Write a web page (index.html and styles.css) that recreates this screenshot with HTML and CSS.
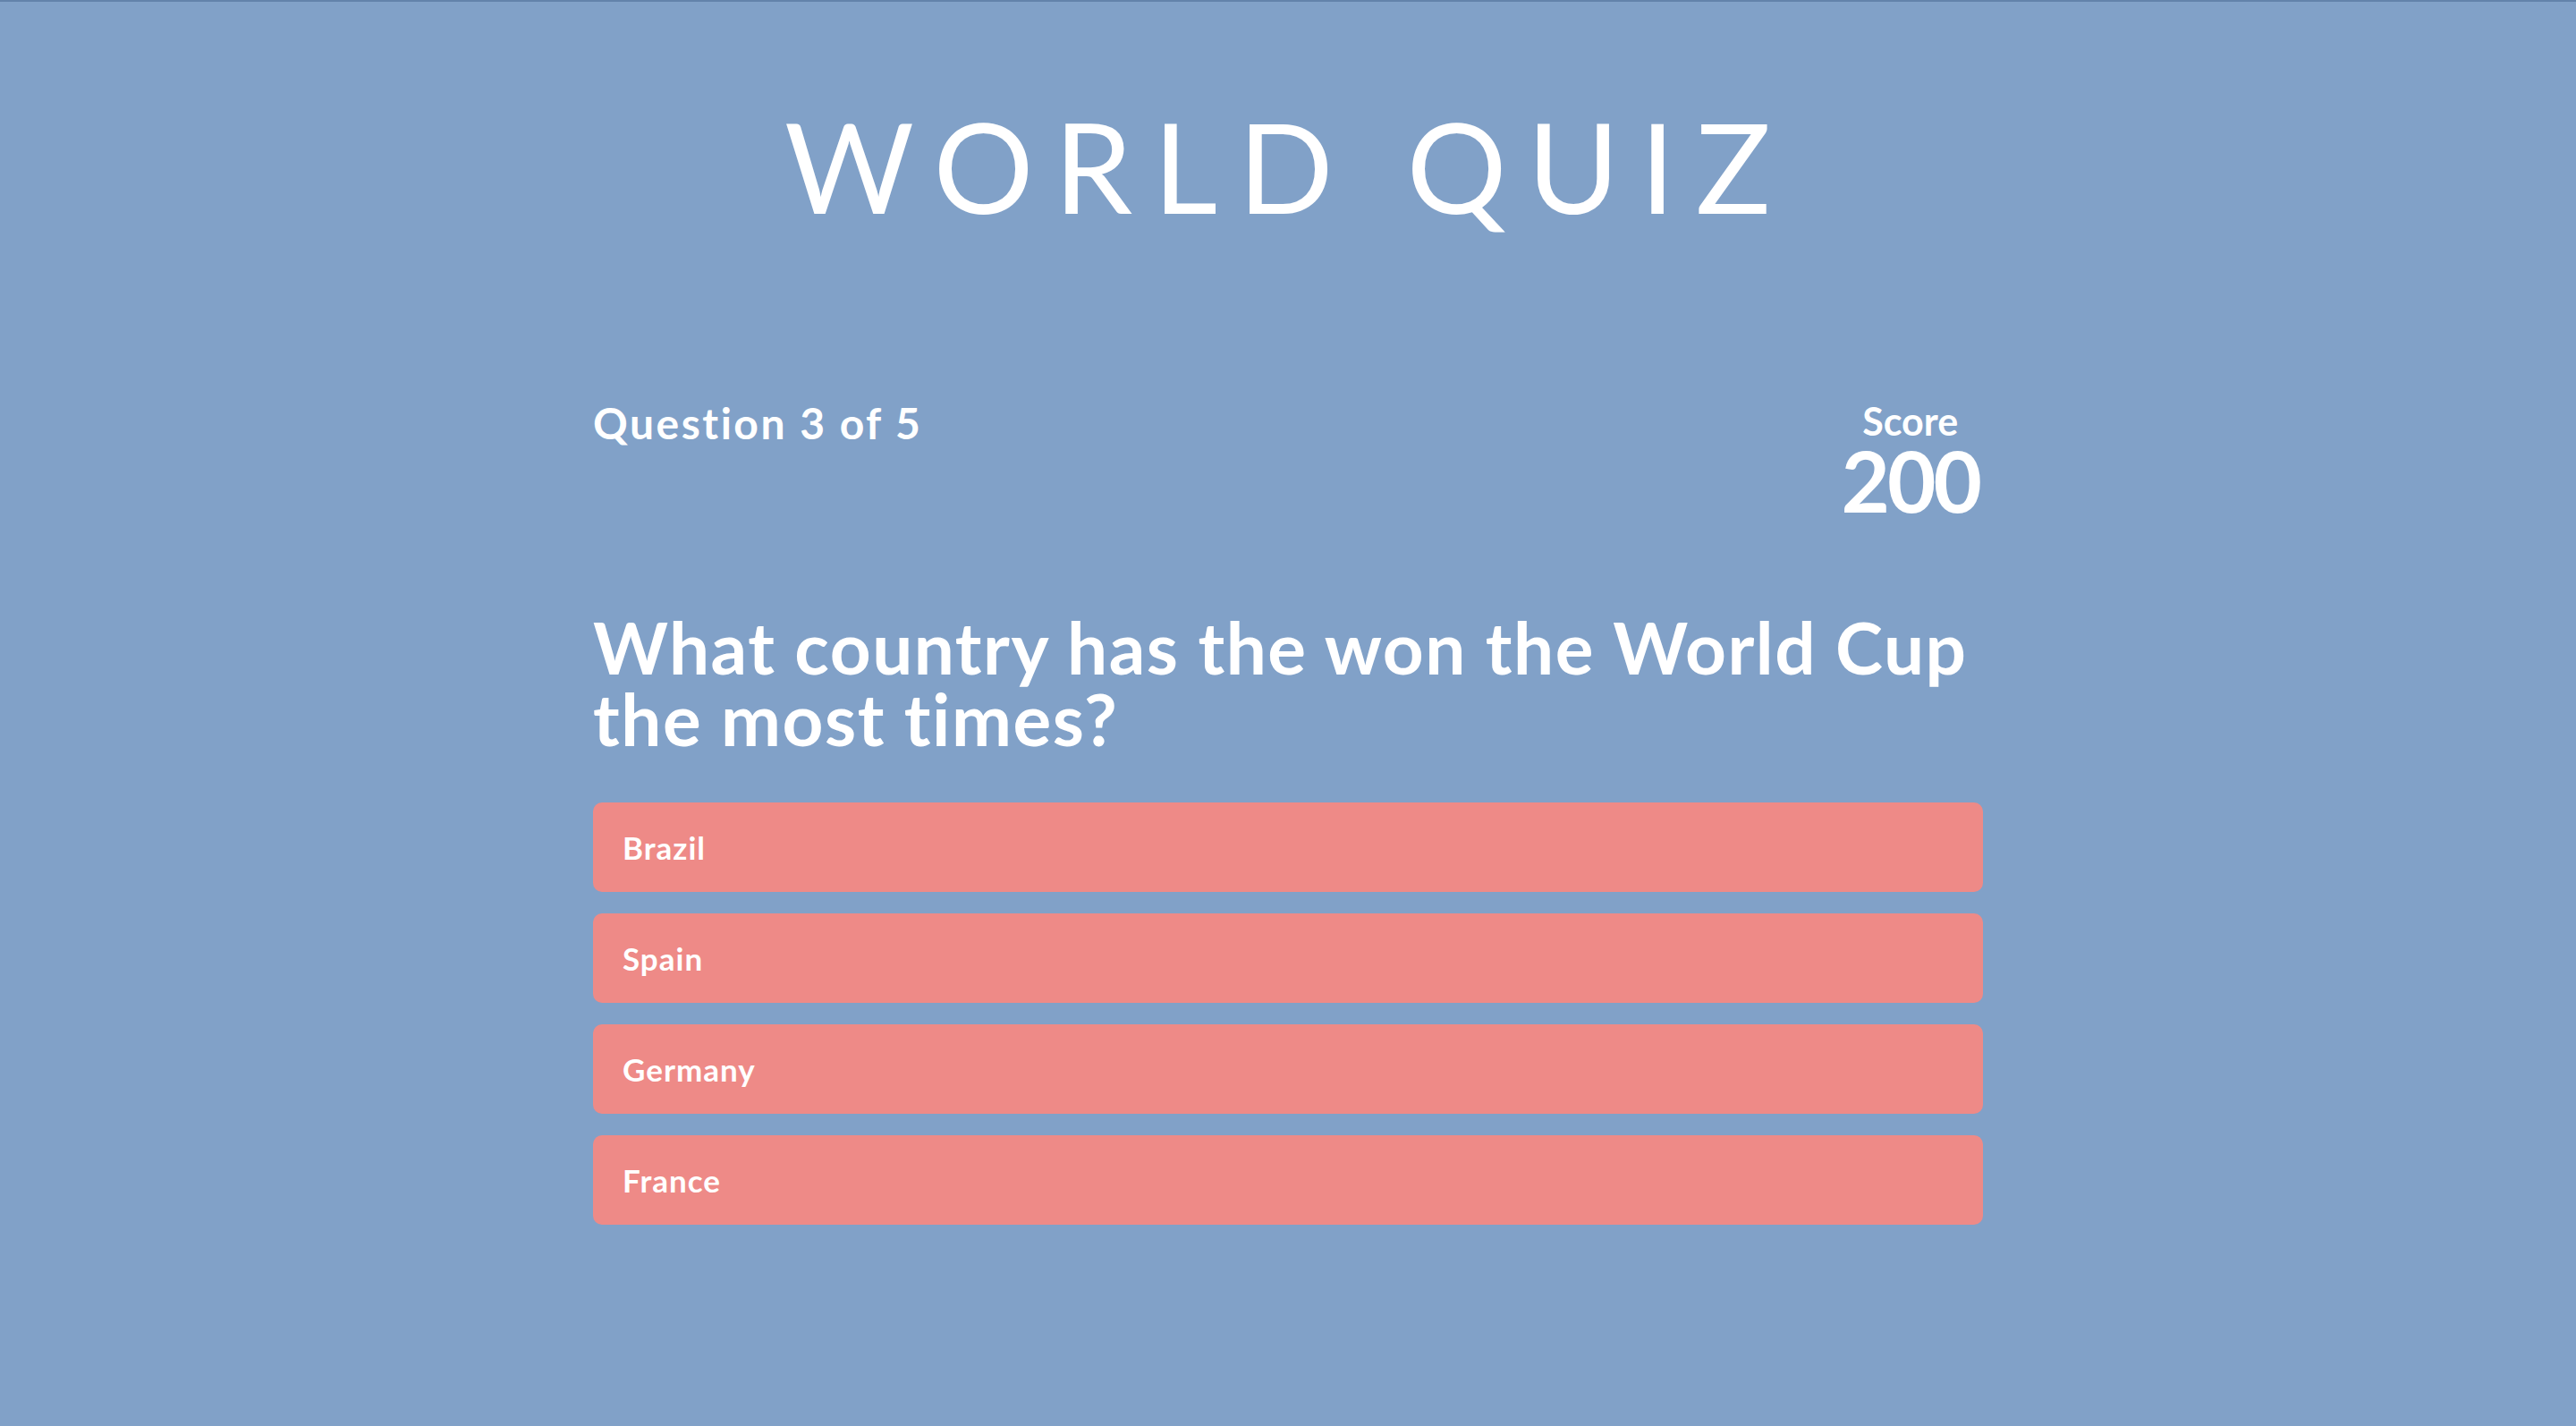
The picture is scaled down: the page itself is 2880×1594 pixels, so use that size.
FILE: index.html
```html
<!DOCTYPE html>
<html lang="en">
<head>
<meta charset="utf-8">
<title>World Quiz</title>
<link rel="stylesheet" href="styles.css">
</head>
<body>
<div class="page">
  <h1 class="title">WORLD QUIZ</h1>
  <main class="quiz">
    <div class="status">
      <div class="progress">Question 3 of 5</div>
      <div class="score">
        <div class="score-label">Score</div>
        <div class="score-value">200</div>
      </div>
    </div>
    <h2 class="question">What country has the won the World Cup the most times?</h2>
    <div class="answers">
      <button class="answer">Brazil</button>
      <button class="answer">Spain</button>
      <button class="answer">Germany</button>
      <button class="answer">France</button>
    </div>
  </main>
</div>
</body>
</html>
```
FILE: styles.css
```css
html, body {
  margin: 0;
  padding: 0;
}
body {
  background: #81a1c8;
  border-top: 2px solid #6383ab;
  min-height: 1592px;
  font-family: "Lato", "Noto Sans", sans-serif;
  color: #ffffff;
}
.page {
  display: flex;
  flex-direction: column;
  align-items: center;
}
.title {
  margin: 113px 0 0 0;
  font-size: 140px;
  line-height: 140px;
  font-weight: 400;
  letter-spacing: 23px;
}
.quiz {
  width: 1554px;
  margin-top: 190px;
  display: flex;
  flex-direction: column;
}
.status {
  display: flex;
  justify-content: space-between;
  align-items: flex-start;
}
.progress {
  font-size: 48px;
  line-height: 56px;
  font-weight: 700;
  letter-spacing: 2.5px;
}
.score {
  display: flex;
  flex-direction: column;
  align-items: center;
  margin: 4px 4px 0 0;
  gap: 4px;
}
.score-label {
  font-size: 43px;
  line-height: 44px;
  font-weight: 700;
}
.score-value {
  font-size: 94px;
  line-height: 80px;
  font-weight: 700;
  letter-spacing: -3px;
}
.question {
  margin: 106px 0 0 0;
  font-size: 80px;
  line-height: 80px;
  font-weight: 700;
  letter-spacing: 1.5px;
}
.answers {
  margin-top: 54px;
  display: flex;
  flex-direction: column;
  gap: 24px;
}
.answer {
  height: 100px;
  border: none;
  border-radius: 10px;
  background: #ee8a87;
  color: #ffffff;
  font-family: inherit;
  font-size: 35px;
  font-weight: 700;
  letter-spacing: 1px;
  text-align: left;
  padding: 0 33px;
}
```
